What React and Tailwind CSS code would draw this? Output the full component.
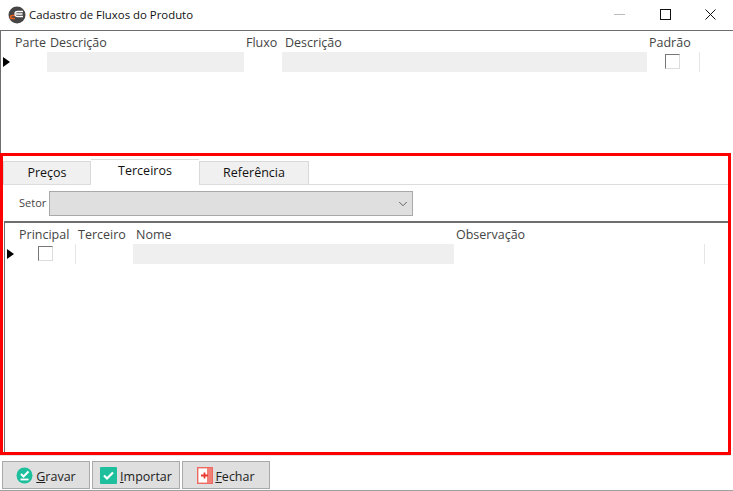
import { ChevronDown } from "lucide-react";

function RowArrow() {
  return <div className="w-0 h-0 border-y-[5px] border-y-transparent border-l-[7px] border-l-black" />;
}

function CheckBox() {
  return <div className="w-[15px] h-[15px] bg-white border border-[#dcdcdc] border-l-[#777] border-t-[#777]" />;
}

function AppIcon() {
  return (
    <svg width="18" height="18" viewBox="0 0 18 18">
      <circle cx="9" cy="9" r="8.5" fill="#454545" />
      <path d="M7.5 9.5H4.5Q2.5 9.5 2.5 11Q2.5 12.5 4.5 12.5H7" fill="none" stroke="#e8601e" strokeWidth="1.6" />
      <path d="M15 5.5H9.5Q7 5.5 7 8Q7 10.5 9.5 10.5H15M8 8H14.5" fill="none" stroke="#fff" strokeWidth="1.3" />
    </svg>
  );
}

function SaveIcon() {
  return (
    <svg width="17" height="17" viewBox="0 0 17 17">
      <circle cx="8.5" cy="8.5" r="8" fill="#1dbf9c" />
      <path d="M5 7l2.5 2.5L12.5 4.5" fill="none" stroke="#fff" strokeWidth="2" />
      <path d="M4.5 12.5h8" stroke="#fff" strokeWidth="1.8" />
    </svg>
  );
}

function ImportIcon() {
  return (
    <svg width="17" height="17" viewBox="0 0 17 17">
      <rect width="17" height="17" rx="1" fill="#1dbf9c" />
      <path d="M4 8.5l3 3L13 5.5" fill="none" stroke="#fff" strokeWidth="2.2" />
    </svg>
  );
}

function CloseIcon() {
  return (
    <svg width="16" height="17" viewBox="0 0 16 17">
      <rect x="0.7" y="0.7" width="14.6" height="15.6" fill="#fff" stroke="#ee6a60" strokeWidth="1.4" />
      <rect x="10" y="1" width="5" height="15" fill="#f08077" />
      <path d="M4 8.5h7M7.5 5.5v6" stroke="#e8382f" strokeWidth="1.8" />
    </svg>
  );
}

function ToolButton({ icon, mnemonic, rest, iconGap }) {
  return (
    <button className="w-[88px] h-[28px] flex items-center justify-center bg-[#dfdfdf] border border-[#a9a9a9] text-[12.5px] text-[#222]">
      {icon}
      <span className={`${iconGap} pt-[4px]`}><span className="underline">{mnemonic}</span>{rest}</span>
    </button>
  );
}

function Tab({ label, active, width }) {
  if (active) {
    return <div className={`${width} h-[26px] -mb-px pb-[2px] flex items-center justify-center bg-white border-t border-[#dcdcdc] text-[12.5px] text-[#111]`}>{label}</div>;
  }
  return <div className={`${width} h-[23px] flex items-center justify-center bg-[#f0f0f0] border border-b-0 border-[#d9d9d9] text-[12.5px] text-[#111]`}>{label}</div>;
}

export default function App() {
  return (
    <div className="w-[733px] h-[491px] bg-white flex flex-col overflow-hidden font-['Open_Sans','Noto_Sans',sans-serif] text-[12.5px] text-[#444]">
      {/* title bar */}
      <div className="h-[30px] shrink-0 flex items-center pl-2">
        <AppIcon />
        <span className="ml-[3px] text-[11.4px] text-[#111]">Cadastro de Fluxos do Produto</span>
        <div className="ml-auto flex items-center pb-[2px]">
          <div className="w-[46px] flex justify-center"><div className="w-[11px] h-px bg-[#bbb]" /></div>
          <div className="w-[46px] flex justify-center"><div className="w-[11px] h-[11px] border border-[#111]" /></div>
          <svg className="ml-[17px] mr-[17px]" width="11" height="11" viewBox="0 0 11 11">
            <path d="M0.5 0.5l10 10M10.5 0.5l-10 10" stroke="#111" strokeWidth="1" />
          </svg>
        </div>
      </div>

      {/* top grid */}
      <div className="h-[123px] shrink-0 border-t border-l border-[#6e6e6e] pt-[4px]">
        <div className="flex h-[17px] items-center leading-none">
          <span className="ml-[14px] w-[35px]">Parte</span>
          <span className="w-[196px]">Descrição</span>
          <span className="w-[39px]">Fluxo</span>
          <span className="w-[364px]">Descrição</span>
          <span>Padrão</span>
        </div>
        <div className="flex h-[20px] items-center">
          <div className="w-[46px] pl-[2px]"><RowArrow /></div>
          <div className="w-[197px] h-full bg-[#efefef]" />
          <div className="w-[38px]" />
          <div className="w-[365px] h-full bg-[#efefef]" />
          <div className="w-[53px] h-full pl-[18px] pt-[2px] border-r border-[#e6e6e6]"><CheckBox /></div>
        </div>
      </div>

      {/* red framed area */}
      <div className="w-[731px] h-[302px] shrink-0 border-[3px] border-[#ff0000] flex flex-col pt-[3px]">
        <div className="flex items-end h-[26px] border-b border-[#dcdcdc]">
          <Tab label="Preços" width="w-[88px]" />
          <Tab label="Terceiros" active width="w-[108px]" />
          <Tab label="Referência" width="w-[110px]" />
        </div>
        <div className="flex items-center h-[36px] pb-[5px] pt-[6px]">
          <span className="ml-4 w-[30px] text-[11px]">Setor</span>
          <div className="w-[364px] h-[25px] bg-[#dfdfdf] border border-[#a9a9a9] flex items-center justify-end pr-[2px]">
            <ChevronDown size={14} strokeWidth={1.4} color="#444" />
          </div>
        </div>
        <div className="flex-1 ml-px border-t-2 border-l border-[#6e6e6e] pt-[3px]">
          <div className="flex h-[18px] items-center leading-none">
            <span className="ml-[14px] w-[59px]">Principal</span>
            <span className="w-[58px]">Terceiro</span>
            <span className="w-[320px]">Nome</span>
            <span>Observação</span>
          </div>
          <div className="flex h-[20px] items-center">
            <div className="w-[33px] pl-[2px]"><RowArrow /></div>
            <div className="w-[38px] h-full pt-[2px] border-r border-[#e6e6e6]"><CheckBox /></div>
            <div className="w-[57px]" />
            <div className="w-[321px] h-full bg-[#efefef]" />
            <div className="w-[251px] h-full border-r border-[#e6e6e6]" />
          </div>
        </div>
      </div>

      {/* bottom toolbar */}
      <div className="flex-1 flex flex-col">
        <div className="w-[730px] h-px bg-[#e4e4e4]" />
        <div className="flex gap-[2px] pl-[2px] pt-[5px]">
          <ToolButton icon={<SaveIcon />} mnemonic="G" rest="ravar" iconGap="ml-[3px]" />
          <ToolButton icon={<ImportIcon />} mnemonic="I" rest="mportar" iconGap="ml-[3px]" />
          <ToolButton icon={<CloseIcon />} mnemonic="F" rest="echar" iconGap="ml-[2px]" />
        </div>
        <div className="mt-auto h-px bg-[#a0a0a0]" />
      </div>
    </div>
  );
}
